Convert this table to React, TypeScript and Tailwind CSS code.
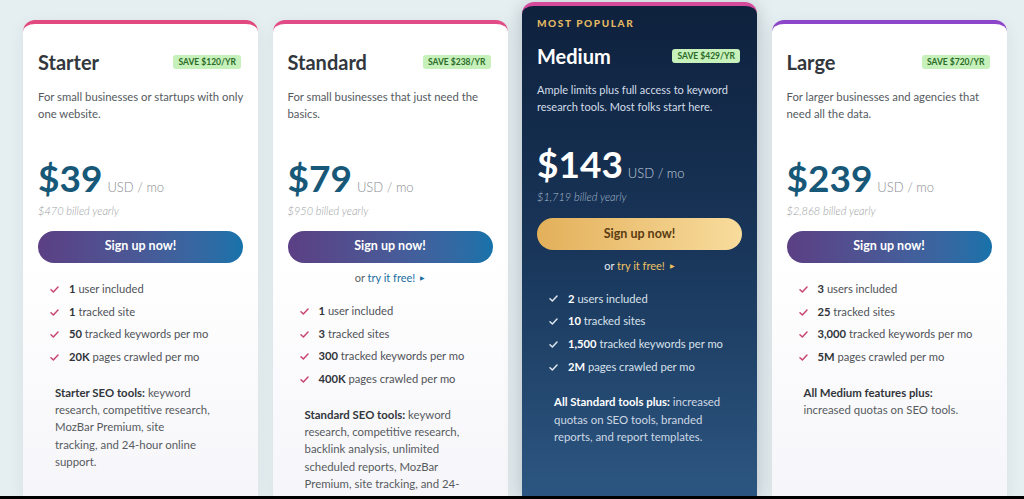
import React from 'react';

type Plan = {
  name: string;
  save: string;
  desc: string;
  price: string;
  billed: string;
  bar: string;
  trial?: boolean;
  popular?: boolean;
  features: [string, string][];
  toolsTitle: string;
  toolsLines: string[];
};

const plans: Plan[] = [
  {
    name: 'Starter',
    save: 'SAVE $120/YR',
    desc: 'For small businesses or startups with only one website.',
    price: '$39',
    billed: '$470 billed yearly',
    bar: 'border-[#e2497f]',
    features: [
      ['1', 'user included'],
      ['1', 'tracked site'],
      ['50', 'tracked keywords per mo'],
      ['20K', 'pages crawled per mo'],
    ],
    toolsTitle: 'Starter SEO tools:',
    toolsLines: [' keyword', 'research, competitive research,', 'MozBar Premium, site', 'tracking, and 24-hour online', 'support.'],
  },
  {
    name: 'Standard',
    save: 'SAVE $238/YR',
    desc: 'For small businesses that just need the basics.',
    price: '$79',
    billed: '$950 billed yearly',
    bar: 'border-[#e24c86]',
    trial: true,
    features: [
      ['1', 'user included'],
      ['3', 'tracked sites'],
      ['300', 'tracked keywords per mo'],
      ['400K', 'pages crawled per mo'],
    ],
    toolsTitle: 'Standard SEO tools:',
    toolsLines: [' keyword', 'research, competitive research,', 'backlink analysis, unlimited', 'scheduled reports, MozBar', 'Premium, site tracking, and 24-', 'hour online support.'],
  },
  {
    name: 'Medium',
    save: 'SAVE $429/YR',
    desc: 'Ample limits plus full access to keyword research tools. Most folks start here.',
    price: '$143',
    billed: '$1,719 billed yearly',
    bar: 'border-[#d64a9c]',
    trial: true,
    popular: true,
    features: [
      ['2', 'users included'],
      ['10', 'tracked sites'],
      ['1,500', 'tracked keywords per mo'],
      ['2M', 'pages crawled per mo'],
    ],
    toolsTitle: 'All Standard tools plus:',
    toolsLines: [' increased', 'quotas on SEO tools, branded', 'reports, and report templates.'],
  },
  {
    name: 'Large',
    save: 'SAVE $720/YR',
    desc: 'For larger businesses and agencies that need all the data.',
    price: '$239',
    billed: '$2,868 billed yearly',
    bar: 'border-[#8d45c9]',
    features: [
      ['3', 'users included'],
      ['25', 'tracked sites'],
      ['3,000', 'tracked keywords per mo'],
      ['5M', 'pages crawled per mo'],
    ],
    toolsTitle: 'All Medium features plus:',
    toolsLines: ['', 'increased quotas on SEO tools.'],
  },
];

const Check = ({ className }: { className: string }) => (
  <svg viewBox="0 0 10 8" className={`w-[9px] h-[7px] ${className}`} fill="none">
    <path d="M1 4.2l2.7 2.6L9 1.2" stroke="currentColor" strokeWidth="1.7" strokeLinecap="round" strokeLinejoin="round" />
  </svg>
);

const PlanCard = ({ plan }: { plan: Plan }) => {
  const dark = !!plan.popular;

  return (
    <div
      className={`w-[235px] shrink-0 rounded-t-[12px] border-t-4 ${plan.bar} ${
        dark
          ? 'mt-[2px] bg-gradient-to-b from-[#0e213d] via-[#19365a] to-[#2c5681] shadow-[0_4px_18px_rgba(10,30,60,0.25)]'
          : 'mt-[20px] bg-gradient-to-b from-white via-white to-[#f6f6fa] shadow-[0_4px_16px_rgba(40,60,80,0.07)]'
      }`}
    >
      {dark ? (
        <div className="pt-[11px] pl-[15px] h-[12px] box-content text-[10px] leading-[12px] font-black tracking-[0.16em] text-[#e3b862]">
          MOST POPULAR
        </div>
      ) : null}

      <div className={`flex items-center justify-between pl-[15px] pr-[17px] ${dark ? 'mt-[14px]' : 'pt-[25px]'}`}>
        <h2 className={`text-[20px] leading-[26px] font-bold ${dark ? 'text-white' : 'text-[#32373d]'}`}>{plan.name}</h2>
        <span className="rounded-[3px] bg-[#c6f1bb] px-[5px] h-[14px] flex items-center text-[8.5px] font-bold text-[#2b6a27]">
          {plan.save}
        </span>
      </div>

      <p
        className={`px-[15px] leading-[17px] ${
          dark ? 'mt-[11.5px] text-[11px] text-[#d3dde8]' : 'mt-[12.5px] text-[11.3px] text-[#555a60]'
        }`}
      >
        {plan.desc}
      </p>

      <div className={`flex items-baseline px-[15px] ${dark ? 'mt-[29.5px]' : 'mt-[36px]'}`}>
        <span className={`text-[37px] leading-[40px] font-bold ${dark ? 'text-white' : 'text-[#175878]'}`}>{plan.price}</span>
        <span className={`ml-[5px] text-[13px] font-light ${dark ? 'text-[#c2cfdd]' : 'text-[#8a8d91]'}`}>USD / mo</span>
      </div>
      <div className={`mt-[6px] px-[15px] text-[11px] leading-[14px] italic font-light ${dark ? 'text-[#a9bacd]' : 'text-[#9a9da1]'}`}>
        {plan.billed}
      </div>

      <div className={`px-[15px] ${dark ? 'mt-[14px]' : 'mt-[13px]'}`}>
        <button
          className={`w-full h-[32px] rounded-full text-[12.5px] font-bold ${
            dark
              ? 'bg-gradient-to-r from-[#e3b05a] to-[#f8dc9c] text-[#5a3b12]'
              : 'bg-gradient-to-r from-[#5b3f84] to-[#1672aa] text-white'
          }`}
        >
          Sign up now!
        </button>
      </div>

      {plan.trial ? (
        <div className={`flex items-center justify-center gap-[5px] text-[11px] leading-[14px] ${dark ? 'mt-[9px]' : 'mt-[8px]'}`}>
          <span className={dark ? 'text-[#e7edf3]' : 'text-[#5a5e63]'}>
            or <span className={dark ? 'text-[#efc15f]' : 'text-[#1b6ea2]'}>try it free!</span>
          </span>
          <span className={`text-[6px] ${dark ? 'text-[#efc15f]' : 'text-[#1b6ea2]'}`}>▶</span>
        </div>
      ) : null}

      <ul className={`pl-[27px] ${dark ? 'mt-[14.6px]' : 'mt-[15.6px]'}`}>
        {plan.features.map(([num, text]) => (
          <li key={text} className="flex items-center h-[22.7px] text-[11.2px]">
            <Check className={dark ? 'text-[#dfe7f0]' : 'text-[#c8456f]'} />
            <span className={`ml-[10px] ${dark ? 'text-[#d8e1eb]' : 'text-[#4f5358]'}`}>
              <b className={dark ? 'text-white' : 'text-[#30343a]'}>{num}</b> {text}
            </span>
          </li>
        ))}
      </ul>

      <p
        className={`mt-[15px] pl-[32px] text-[11.4px] leading-[17.25px] whitespace-nowrap ${
          dark ? 'text-[#cdd8e4]' : 'text-[#575b60]'
        }`}
      >
        <b className={dark ? 'text-white' : 'text-[#32363b]'}>{plan.toolsTitle}</b>
        {plan.toolsLines.map((line, i) => (
          <React.Fragment key={i}>
            {i > 0 ? <br /> : null}
            {line}
          </React.Fragment>
        ))}
      </p>
    </div>
  );
};

export default function App() {
  return (
    <div className="w-[1024px] h-[499px] overflow-hidden flex flex-col bg-[#e5eef0]" style={{ fontFamily: 'Lato, "Open Sans", sans-serif' }}>
      <div className="h-[496px] overflow-hidden flex items-stretch gap-[14.5px] pl-[23px]">
        {plans.map((p) => (
          <PlanCard key={p.name} plan={p} />
        ))}
      </div>
      <div className="h-[3px] bg-black" />
    </div>
  );
}
